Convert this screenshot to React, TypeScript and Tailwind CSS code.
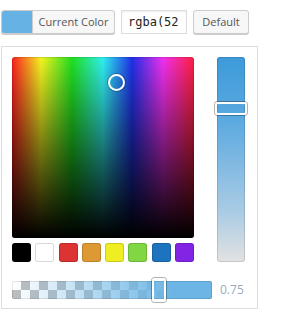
const swatches = ["#000000", "#ffffff", "#dd3333", "#dd9933", "#eeee22", "#81d742", "#1e73be", "#8224e3"];

function App() {
	return (
		<div className="w-[287px] h-[319px] bg-white font-['Open_Sans',sans-serif]">
			{/* Current color | value input | default */}
			<div className="flex items-start pt-[10px] pl-[1px]">
				<button className="flex h-[24px] w-[114px] overflow-hidden rounded-[3px] border border-[#ccc] bg-[#f7f7f7] shadow-[0_1px_0_#ccc]">
					<span className="w-[30px] h-full bg-[#67b2e4]"></span>
					<span className="flex-1 h-full border-l border-[#ccc] text-[11px] leading-[22px] text-[#555] text-center">Current Color</span>
				</button>
				<input
					readOnly
					value="rgba(52, 152, 219, 0.75)"
					className="ml-[6px] h-[24px] w-[66px] border border-[#ddd] px-[6px] font-['DejaVu_Sans_Mono',monospace] text-[12px] text-[#222] outline-none shadow-[inset_0_1px_2px_rgba(0,0,0,0.07)]"
				/>
				<button className="ml-[6px] h-[24px] w-[56px] rounded-[3px] border border-[#ccc] bg-[#f7f7f7] text-[11px] text-[#555] shadow-[0_1px_0_#ccc]">Default</button>
			</div>

			{/* Picker panel */}
			<div className="mt-[12px] ml-[1px] w-[257px] border border-[#dddddd] pt-[10px] pb-[9px] px-[10px]">
				<div className="flex">
					<div className="w-[182px]">
						<div className="relative h-[181px] rounded-[3px] overflow-hidden bg-[linear-gradient(to_right,#ff2020,#f4f420_16%,#20e020_33%,#30f0f0_50%,#2030e8_66%,#f030f0_83%,#ff2040)]">
							<div className="absolute inset-0 bg-[linear-gradient(to_bottom,rgba(0,0,0,0)_0%,rgba(0,0,0,0.45)_45%,#000_100%)]"></div>
							<div className="absolute inset-0 rounded-[3px] shadow-[inset_0_0_2px_rgba(0,0,0,0.4)]"></div>
							<div className="absolute left-[96px] top-[17px] w-[17px] h-[17px] rounded-full border-[2px] border-white ring-1 ring-black/25"></div>
						</div>
						<div className="mt-[5px] flex justify-between">
							{swatches.map((c) => (
								<span key={c} className="w-[19px] h-[19px] rounded-[3px] shadow-[inset_0_0_0_1px_rgba(0,0,0,0.15)]" style={{ background: c }}></span>
							))}
						</div>
					</div>
					{/* Lightness strip */}
					<div className="relative ml-[23px] w-[28px] h-[205px] rounded-[3px] bg-[linear-gradient(to_bottom,#3d9ad9,#5aa9e0_30%,#a9cbe4_75%,#e2e2e2)] shadow-[inset_0_0_0_1px_rgba(0,0,0,0.12)]">
						<div className="absolute left-[-2px] top-[45px] w-[32px] h-[13px] rounded-[3px] border-[2px] border-white ring-1 ring-black/30"></div>
					</div>
				</div>

				{/* Alpha */}
				<div className="mt-[19px] flex items-center">
					<div className="relative w-[200px] h-[18px] rounded-[2px] bg-[repeating-conic-gradient(#bdbdbd_0_25%,#ffffff_0_50%)] [background-size:18px_18px]">
						<div className="absolute inset-0 rounded-[2px] bg-[linear-gradient(to_right,rgba(108,181,229,0),rgba(108,181,229,1)_80%)] shadow-[inset_0_0_0_1px_rgba(0,0,0,0.1)]"></div>
						<div className="absolute left-[140px] top-[-3px] w-[14px] h-[24px] rounded-[3px] border-[2px] border-white ring-1 ring-black/30"></div>
					</div>
					<span className="ml-[8px] text-[12px] text-[#9ab]">0.75</span>
				</div>
			</div>
		</div>
	);
}

export default App;
